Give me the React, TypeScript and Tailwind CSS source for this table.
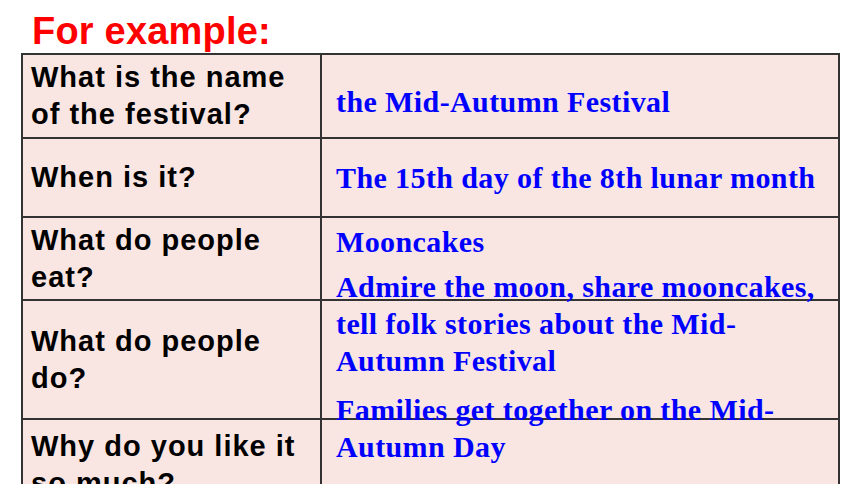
import React from "react";

const sans = "font-['Liberation_Sans',Arial,sans-serif]";
const serif = "font-['Liberation_Serif','Times_New_Roman',serif]";

function LeftCell({ children, h }: { children: React.ReactNode; h: string }) {
  return (
    <div
      className={`${h} w-[299px] shrink-0 border-r-2 border-[#333] pl-[8px] flex items-center text-[29px] leading-[37px] font-bold tracking-[1px] text-black ${sans}`}
    >
      <div>{children}</div>
    </div>
  );
}

function Blue({ children, className = "" }: { children: React.ReactNode; className?: string }) {
  return (
    <div
      className={`relative whitespace-nowrap text-[30px] leading-[37px] font-bold tracking-[0.4px] text-[#0000ff] ${serif} ${className}`}
    >
      {children}
    </div>
  );
}

export default function App() {
  return (
    <div className="h-[484px] w-[860px] overflow-hidden bg-white pt-[11px]">
      <div
        className={`pl-[32px] text-[38px] leading-[40px] font-bold tracking-[0.2px] text-[#ff0000] ${sans}`}
      >
        For example:
      </div>
      <div className="ml-[21px] mt-[2px] w-[819px] border-2 border-b-0 border-[#333] bg-[#f9e5e1]">
        {/* Row 1 */}
        <div className="flex border-b-2 border-[#333]">
          <LeftCell h="h-[82px]">
            What is the name
            <br />
            of the festival?
          </LeftCell>
          <div className="flex-1 pl-[14px] pt-[28px]">
            <Blue>the Mid-Autumn Festival</Blue>
          </div>
        </div>
        {/* Row 2 */}
        <div className="flex border-b-2 border-[#333]">
          <LeftCell h="h-[77px]">When is it?</LeftCell>
          <div className="flex-1 pl-[14px] pt-[20px]">
            <Blue>The 15th day of the 8th lunar month</Blue>
          </div>
        </div>
        {/* Row 3 */}
        <div className="flex border-b-2 border-[#333]">
          <LeftCell h="h-[81px]">
            What do people
            <br />
            eat?
          </LeftCell>
          <div className="h-[81px] flex-1 pl-[14px] pt-[5px]">
            <Blue>Mooncakes</Blue>
            <Blue className="mt-[8px] leading-[37.5px]">
              Admire the moon, share mooncakes,
              <br />
              tell folk stories about the Mid-
              <br />
              Autumn Festival
            </Blue>
          </div>
        </div>
        {/* Row 4 */}
        <div className="flex border-b-2 border-[#333]">
          <LeftCell h="h-[117px]">
            What do people
            <br />
            do?
          </LeftCell>
          <div className="h-[117px] flex-1 pl-[14px] pt-[90px]">
            <Blue>
              Families get together on the Mid-
              <br />
              Autumn Day
            </Blue>
          </div>
        </div>
        {/* Row 5 */}
        <div className="flex">
          <LeftCell h="h-[90px]">
            Why do you like it
            <br />
            so much?
          </LeftCell>
          <div className="h-[90px] flex-1" />
        </div>
      </div>
    </div>
  );
}
